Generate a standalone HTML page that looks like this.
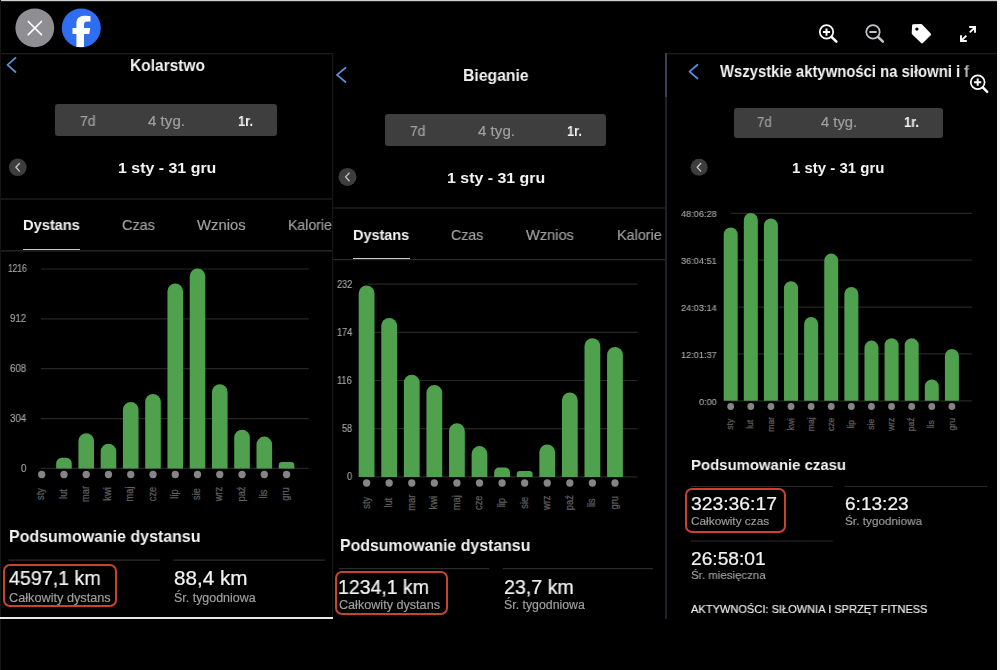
<!DOCTYPE html>
<html><head><meta charset="utf-8"><style>
html,body{margin:0;padding:0;background:#000;width:1000px;height:670px;overflow:hidden}
body{position:relative;font-family:"Liberation Sans",sans-serif}
.t{position:absolute;white-space:nowrap;transform-origin:0 0;will-change:transform}
svg{position:absolute;left:0;top:0}
svg text{font-family:"Liberation Sans",sans-serif}
</style></head><body>
<svg width="1000" height="670" viewBox="0 0 1000 670">
<line x1="0" y1="53.6" x2="332.5" y2="53.6" stroke="#1c1c1c" stroke-width="1.2"/>
<line x1="666" y1="53.6" x2="997" y2="53.6" stroke="#1c1c1c" stroke-width="1.2"/>
<circle cx="34.8" cy="27.8" r="19.4" fill="#8e8e93"/>
<path d="M28.3,21.5 L41.4,34.6 M41.4,21.5 L28.3,34.6" stroke="#fff" stroke-width="1.7" stroke-linecap="round"/>
<circle cx="81.3" cy="27.9" r="19.5" fill="#2f6ef2"/>
<path d="M76.4,46.9 V33.9 H72.5 V28 H76.4 V23.6 C76.4,18.6 79.4,15.85 84.4,15.85 C86.6,15.85 89.2,16.1 90.5,16.3 V21.4 H87.2 C84.9,21.4 84,22.6 84,24.6 V28 H90.2 L89.3,33.9 H84 V46.9 Z" fill="#fff"/>
<circle cx="826.5" cy="31.9" r="6.7" fill="none" stroke="#fff" stroke-width="1.7"/>
<path d="M822.9,32 H830.1 M826.5,28.4 V35.7" stroke="#fff" stroke-width="2"/>
<path d="M831.6,37 L836.4,41.6" stroke="#fff" stroke-width="2.5" stroke-linecap="round"/>
<circle cx="873" cy="31.9" r="6.7" fill="none" stroke="#c3c6ca" stroke-width="1.7"/>
<path d="M869.4,32 H876.6" stroke="#c3c6ca" stroke-width="2"/>
<path d="M878.1,37 L882.9,41.6" stroke="#c3c6ca" stroke-width="2.5" stroke-linecap="round"/>
<path d="M913.4,25.6 L921.2,25.4 L929.8,34.3 L922,42.1 L913,33.4 Z" fill="#fff" stroke="#fff" stroke-width="2.6" stroke-linejoin="round"/>
<circle cx="916.9" cy="29.1" r="1.7" fill="#000"/>
<path d="M969.8,32.4 L974.4,27.8 M969.2,27 H975 V32.8 M966.4,35.6 L961.8,40.2 M961,35.2 V41 H966.8" stroke="#fff" stroke-width="1.9" fill="none" stroke-linecap="butt" stroke-linejoin="miter"/>
<line x1="332.6" y1="53" x2="332.6" y2="617.5" stroke="#161616" stroke-width="1.2"/>
<line x1="666" y1="53" x2="666" y2="97" stroke="#3b404c" stroke-width="2"/>
<line x1="666" y1="97" x2="666" y2="619" stroke="#1d212c" stroke-width="2"/>
<path d="M15.50,57.80 L7.50,64.90 L15.50,72.00" fill="none" stroke="#5a8fd8" stroke-width="1.8" stroke-linecap="round" stroke-linejoin="round"/>
<circle cx="17.80" cy="167.30" r="8.80" fill="#3d3d3d"/>
<path d="M19.40,163.50 L15.90,167.30 L19.40,171.10" fill="none" stroke="#c4c4c4" stroke-width="1.4" stroke-linecap="round" stroke-linejoin="round"/>
<line x1="0" y1="199" x2="332" y2="199" stroke="#2b2b2b" stroke-width="1.2"/>
<line x1="0" y1="250.8" x2="332" y2="250.8" stroke="#2b2b2b" stroke-width="1.2"/>
<line x1="41" y1="269.00" x2="308.8" y2="269.00" stroke="#262626" stroke-width="1.2"/>
<line x1="41" y1="318.85" x2="308.8" y2="318.85" stroke="#262626" stroke-width="1.2"/>
<line x1="41" y1="368.70" x2="308.8" y2="368.70" stroke="#262626" stroke-width="1.2"/>
<line x1="41" y1="418.55" x2="308.8" y2="418.55" stroke="#262626" stroke-width="1.2"/>
<line x1="41" y1="468.40" x2="308.8" y2="468.40" stroke="#262626" stroke-width="1.2"/>
<path d="M56.16,468.60 V463.20 A5.40,5.40 0 0 1 61.56,457.80 H66.36 A5.40,5.40 0 0 1 71.76,463.20 V468.60 Z" fill="#4fa14e"/>
<path d="M78.42,468.60 V441.10 A7.80,7.80 0 0 1 86.22,433.30 H86.22 A7.80,7.80 0 0 1 94.02,441.10 V468.60 Z" fill="#4fa14e"/>
<path d="M100.68,468.60 V451.60 A7.80,7.80 0 0 1 108.48,443.80 H108.48 A7.80,7.80 0 0 1 116.28,451.60 V468.60 Z" fill="#4fa14e"/>
<path d="M122.94,468.60 V409.70 A7.80,7.80 0 0 1 130.74,401.90 H130.74 A7.80,7.80 0 0 1 138.54,409.70 V468.60 Z" fill="#4fa14e"/>
<path d="M145.20,468.60 V401.80 A7.80,7.80 0 0 1 153.00,394.00 H153.00 A7.80,7.80 0 0 1 160.80,401.80 V468.60 Z" fill="#4fa14e"/>
<path d="M167.46,468.60 V291.20 A7.80,7.80 0 0 1 175.26,283.40 H175.26 A7.80,7.80 0 0 1 183.06,291.20 V468.60 Z" fill="#4fa14e"/>
<path d="M189.72,468.60 V276.30 A7.80,7.80 0 0 1 197.52,268.50 H197.52 A7.80,7.80 0 0 1 205.32,276.30 V468.60 Z" fill="#4fa14e"/>
<path d="M211.98,468.60 V392.00 A7.80,7.80 0 0 1 219.78,384.20 H219.78 A7.80,7.80 0 0 1 227.58,392.00 V468.60 Z" fill="#4fa14e"/>
<path d="M234.24,468.60 V437.60 A7.80,7.80 0 0 1 242.04,429.80 H242.04 A7.80,7.80 0 0 1 249.84,437.60 V468.60 Z" fill="#4fa14e"/>
<path d="M256.50,468.60 V444.40 A7.80,7.80 0 0 1 264.30,436.60 H264.30 A7.80,7.80 0 0 1 272.10,444.40 V468.60 Z" fill="#4fa14e"/>
<path d="M278.76,468.60 V465.30 A3.30,3.30 0 0 1 282.06,462.00 H291.06 A3.30,3.30 0 0 1 294.36,465.30 V468.60 Z" fill="#4fa14e"/>
<circle cx="41.70" cy="474.50" r="3.65" fill="#858585"/>
<text transform="translate(44.30,494.00) rotate(-90) scale(0.93,1)" text-anchor="middle" font-size="10" fill="#5e5e5e" stroke="#5e5e5e" stroke-width="0.25">sty</text>
<circle cx="63.96" cy="474.50" r="3.65" fill="#858585"/>
<text transform="translate(66.56,494.00) rotate(-90) scale(0.93,1)" text-anchor="middle" font-size="10" fill="#5e5e5e" stroke="#5e5e5e" stroke-width="0.25">lut</text>
<circle cx="86.22" cy="474.50" r="3.65" fill="#858585"/>
<text transform="translate(88.82,494.00) rotate(-90) scale(0.93,1)" text-anchor="middle" font-size="10" fill="#5e5e5e" stroke="#5e5e5e" stroke-width="0.25">mar</text>
<circle cx="108.48" cy="474.50" r="3.65" fill="#858585"/>
<text transform="translate(111.08,494.00) rotate(-90) scale(0.93,1)" text-anchor="middle" font-size="10" fill="#5e5e5e" stroke="#5e5e5e" stroke-width="0.25">kwi</text>
<circle cx="130.74" cy="474.50" r="3.65" fill="#858585"/>
<text transform="translate(133.34,494.00) rotate(-90) scale(0.93,1)" text-anchor="middle" font-size="10" fill="#5e5e5e" stroke="#5e5e5e" stroke-width="0.25">maj</text>
<circle cx="153.00" cy="474.50" r="3.65" fill="#858585"/>
<text transform="translate(155.60,494.00) rotate(-90) scale(0.93,1)" text-anchor="middle" font-size="10" fill="#5e5e5e" stroke="#5e5e5e" stroke-width="0.25">cze</text>
<circle cx="175.26" cy="474.50" r="3.65" fill="#858585"/>
<text transform="translate(177.86,494.00) rotate(-90) scale(0.93,1)" text-anchor="middle" font-size="10" fill="#5e5e5e" stroke="#5e5e5e" stroke-width="0.25">lip</text>
<circle cx="197.52" cy="474.50" r="3.65" fill="#858585"/>
<text transform="translate(200.12,494.00) rotate(-90) scale(0.93,1)" text-anchor="middle" font-size="10" fill="#5e5e5e" stroke="#5e5e5e" stroke-width="0.25">sie</text>
<circle cx="219.78" cy="474.50" r="3.65" fill="#858585"/>
<text transform="translate(222.38,494.00) rotate(-90) scale(0.93,1)" text-anchor="middle" font-size="10" fill="#5e5e5e" stroke="#5e5e5e" stroke-width="0.25">wrz</text>
<circle cx="242.04" cy="474.50" r="3.65" fill="#858585"/>
<text transform="translate(244.64,494.00) rotate(-90) scale(0.93,1)" text-anchor="middle" font-size="10" fill="#5e5e5e" stroke="#5e5e5e" stroke-width="0.25">paź</text>
<circle cx="264.30" cy="474.50" r="3.65" fill="#858585"/>
<text transform="translate(266.90,494.00) rotate(-90) scale(0.93,1)" text-anchor="middle" font-size="10" fill="#5e5e5e" stroke="#5e5e5e" stroke-width="0.25">lis</text>
<circle cx="286.56" cy="474.50" r="3.65" fill="#858585"/>
<text transform="translate(289.16,494.00) rotate(-90) scale(0.93,1)" text-anchor="middle" font-size="10" fill="#5e5e5e" stroke="#5e5e5e" stroke-width="0.25">gru</text>
<line x1="8.2" y1="560.2" x2="160" y2="560.2" stroke="#2b2b2b" stroke-width="1.2"/>
<line x1="173.2" y1="560.2" x2="324.8" y2="560.2" stroke="#2b2b2b" stroke-width="1.2"/>
<path d="M345.50,67.80 L337.00,74.90 L345.50,82.00" fill="none" stroke="#5a8fd8" stroke-width="1.8" stroke-linecap="round" stroke-linejoin="round"/>
<circle cx="347.50" cy="176.90" r="9.00" fill="#3d3d3d"/>
<path d="M349.10,173.10 L345.60,176.90 L349.10,180.70" fill="none" stroke="#c4c4c4" stroke-width="1.4" stroke-linecap="round" stroke-linejoin="round"/>
<line x1="333" y1="208" x2="665" y2="208" stroke="#2b2b2b" stroke-width="1.2"/>
<line x1="333" y1="259.6" x2="665" y2="259.6" stroke="#2b2b2b" stroke-width="1.2"/>
<line x1="367.4" y1="284.20" x2="637.4" y2="284.20" stroke="#262626" stroke-width="1.2"/>
<line x1="367.4" y1="332.35" x2="637.4" y2="332.35" stroke="#262626" stroke-width="1.2"/>
<line x1="367.4" y1="380.50" x2="637.4" y2="380.50" stroke="#262626" stroke-width="1.2"/>
<line x1="367.4" y1="428.65" x2="637.4" y2="428.65" stroke="#262626" stroke-width="1.2"/>
<line x1="367.4" y1="476.80" x2="637.4" y2="476.80" stroke="#262626" stroke-width="1.2"/>
<path d="M358.70,477.00 V293.40 A7.90,7.90 0 0 1 366.60,285.50 H366.60 A7.90,7.90 0 0 1 374.50,293.40 V477.00 Z" fill="#4fa14e"/>
<path d="M381.28,477.00 V325.80 A7.90,7.90 0 0 1 389.18,317.90 H389.18 A7.90,7.90 0 0 1 397.08,325.80 V477.00 Z" fill="#4fa14e"/>
<path d="M403.86,477.00 V382.70 A7.90,7.90 0 0 1 411.76,374.80 H411.76 A7.90,7.90 0 0 1 419.66,382.70 V477.00 Z" fill="#4fa14e"/>
<path d="M426.44,477.00 V392.80 A7.90,7.90 0 0 1 434.34,384.90 H434.34 A7.90,7.90 0 0 1 442.24,392.80 V477.00 Z" fill="#4fa14e"/>
<path d="M449.02,477.00 V431.20 A7.90,7.90 0 0 1 456.92,423.30 H456.92 A7.90,7.90 0 0 1 464.82,431.20 V477.00 Z" fill="#4fa14e"/>
<path d="M471.60,477.00 V454.00 A7.90,7.90 0 0 1 479.50,446.10 H479.50 A7.90,7.90 0 0 1 487.40,454.00 V477.00 Z" fill="#4fa14e"/>
<path d="M494.18,477.00 V472.30 A4.70,4.70 0 0 1 498.88,467.60 H505.28 A4.70,4.70 0 0 1 509.98,472.30 V477.00 Z" fill="#4fa14e"/>
<path d="M516.76,477.00 V474.00 A3.00,3.00 0 0 1 519.76,471.00 H529.56 A3.00,3.00 0 0 1 532.56,474.00 V477.00 Z" fill="#4fa14e"/>
<path d="M539.34,477.00 V452.30 A7.90,7.90 0 0 1 547.24,444.40 H547.24 A7.90,7.90 0 0 1 555.14,452.30 V477.00 Z" fill="#4fa14e"/>
<path d="M561.92,477.00 V400.40 A7.90,7.90 0 0 1 569.82,392.50 H569.82 A7.90,7.90 0 0 1 577.72,400.40 V477.00 Z" fill="#4fa14e"/>
<path d="M584.50,477.00 V346.20 A7.90,7.90 0 0 1 592.40,338.30 H592.40 A7.90,7.90 0 0 1 600.30,346.20 V477.00 Z" fill="#4fa14e"/>
<path d="M607.08,477.00 V354.90 A7.90,7.90 0 0 1 614.98,347.00 H614.98 A7.90,7.90 0 0 1 622.88,354.90 V477.00 Z" fill="#4fa14e"/>
<circle cx="366.60" cy="483.00" r="3.65" fill="#858585"/>
<text transform="translate(369.50,502.70) rotate(-90) scale(0.93,1)" text-anchor="middle" font-size="10" fill="#5e5e5e" stroke="#5e5e5e" stroke-width="0.25">sty</text>
<circle cx="389.18" cy="483.00" r="3.65" fill="#858585"/>
<text transform="translate(392.08,502.70) rotate(-90) scale(0.93,1)" text-anchor="middle" font-size="10" fill="#5e5e5e" stroke="#5e5e5e" stroke-width="0.25">lut</text>
<circle cx="411.76" cy="483.00" r="3.65" fill="#858585"/>
<text transform="translate(414.66,502.70) rotate(-90) scale(0.93,1)" text-anchor="middle" font-size="10" fill="#5e5e5e" stroke="#5e5e5e" stroke-width="0.25">mar</text>
<circle cx="434.34" cy="483.00" r="3.65" fill="#858585"/>
<text transform="translate(437.24,502.70) rotate(-90) scale(0.93,1)" text-anchor="middle" font-size="10" fill="#5e5e5e" stroke="#5e5e5e" stroke-width="0.25">kwi</text>
<circle cx="456.92" cy="483.00" r="3.65" fill="#858585"/>
<text transform="translate(459.82,502.70) rotate(-90) scale(0.93,1)" text-anchor="middle" font-size="10" fill="#5e5e5e" stroke="#5e5e5e" stroke-width="0.25">maj</text>
<circle cx="479.50" cy="483.00" r="3.65" fill="#858585"/>
<text transform="translate(482.40,502.70) rotate(-90) scale(0.93,1)" text-anchor="middle" font-size="10" fill="#5e5e5e" stroke="#5e5e5e" stroke-width="0.25">cze</text>
<circle cx="502.08" cy="483.00" r="3.65" fill="#858585"/>
<text transform="translate(504.98,502.70) rotate(-90) scale(0.93,1)" text-anchor="middle" font-size="10" fill="#5e5e5e" stroke="#5e5e5e" stroke-width="0.25">lip</text>
<circle cx="524.66" cy="483.00" r="3.65" fill="#858585"/>
<text transform="translate(527.56,502.70) rotate(-90) scale(0.93,1)" text-anchor="middle" font-size="10" fill="#5e5e5e" stroke="#5e5e5e" stroke-width="0.25">sie</text>
<circle cx="547.24" cy="483.00" r="3.65" fill="#858585"/>
<text transform="translate(550.14,502.70) rotate(-90) scale(0.93,1)" text-anchor="middle" font-size="10" fill="#5e5e5e" stroke="#5e5e5e" stroke-width="0.25">wrz</text>
<circle cx="569.82" cy="483.00" r="3.65" fill="#858585"/>
<text transform="translate(572.72,502.70) rotate(-90) scale(0.93,1)" text-anchor="middle" font-size="10" fill="#5e5e5e" stroke="#5e5e5e" stroke-width="0.25">paź</text>
<circle cx="592.40" cy="483.00" r="3.65" fill="#858585"/>
<text transform="translate(595.30,502.70) rotate(-90) scale(0.93,1)" text-anchor="middle" font-size="10" fill="#5e5e5e" stroke="#5e5e5e" stroke-width="0.25">lis</text>
<circle cx="614.98" cy="483.00" r="3.65" fill="#858585"/>
<text transform="translate(617.88,502.70) rotate(-90) scale(0.93,1)" text-anchor="middle" font-size="10" fill="#5e5e5e" stroke="#5e5e5e" stroke-width="0.25">gru</text>
<line x1="339" y1="568.6" x2="489.2" y2="568.6" stroke="#2b2b2b" stroke-width="1.2"/>
<line x1="502.8" y1="568.6" x2="653" y2="568.6" stroke="#2b2b2b" stroke-width="1.2"/>
<path d="M697.50,64.80 L689.50,71.65 L697.50,78.50" fill="none" stroke="#5a8fd8" stroke-width="1.8" stroke-linecap="round" stroke-linejoin="round"/>
<circle cx="699.10" cy="167.30" r="8.50" fill="#3d3d3d"/>
<path d="M700.70,163.50 L697.20,167.30 L700.70,171.10" fill="none" stroke="#c4c4c4" stroke-width="1.4" stroke-linecap="round" stroke-linejoin="round"/>
<line x1="730.8" y1="213.30" x2="972" y2="213.30" stroke="#262626" stroke-width="1.2"/>
<line x1="730.8" y1="260.18" x2="972" y2="260.18" stroke="#262626" stroke-width="1.2"/>
<line x1="730.8" y1="307.06" x2="972" y2="307.06" stroke="#262626" stroke-width="1.2"/>
<line x1="730.8" y1="353.94" x2="972" y2="353.94" stroke="#262626" stroke-width="1.2"/>
<line x1="730.8" y1="400.82" x2="972" y2="400.82" stroke="#262626" stroke-width="1.2"/>
<path d="M723.70,400.80 V234.50 A7.00,7.00 0 0 1 730.70,227.50 H730.70 A7.00,7.00 0 0 1 737.70,234.50 V400.80 Z" fill="#4fa14e"/>
<path d="M743.81,400.80 V219.90 A7.00,7.00 0 0 1 750.81,212.90 H750.81 A7.00,7.00 0 0 1 757.81,219.90 V400.80 Z" fill="#4fa14e"/>
<path d="M763.92,400.80 V225.50 A7.00,7.00 0 0 1 770.92,218.50 H770.92 A7.00,7.00 0 0 1 777.92,225.50 V400.80 Z" fill="#4fa14e"/>
<path d="M784.03,400.80 V288.20 A7.00,7.00 0 0 1 791.03,281.20 H791.03 A7.00,7.00 0 0 1 798.03,288.20 V400.80 Z" fill="#4fa14e"/>
<path d="M804.14,400.80 V324.00 A7.00,7.00 0 0 1 811.14,317.00 H811.14 A7.00,7.00 0 0 1 818.14,324.00 V400.80 Z" fill="#4fa14e"/>
<path d="M824.25,400.80 V260.60 A7.00,7.00 0 0 1 831.25,253.60 H831.25 A7.00,7.00 0 0 1 838.25,260.60 V400.80 Z" fill="#4fa14e"/>
<path d="M844.36,400.80 V294.00 A7.00,7.00 0 0 1 851.36,287.00 H851.36 A7.00,7.00 0 0 1 858.36,294.00 V400.80 Z" fill="#4fa14e"/>
<path d="M864.47,400.80 V347.60 A7.00,7.00 0 0 1 871.47,340.60 H871.47 A7.00,7.00 0 0 1 878.47,347.60 V400.80 Z" fill="#4fa14e"/>
<path d="M884.58,400.80 V345.30 A7.00,7.00 0 0 1 891.58,338.30 H891.58 A7.00,7.00 0 0 1 898.58,345.30 V400.80 Z" fill="#4fa14e"/>
<path d="M904.69,400.80 V345.30 A7.00,7.00 0 0 1 911.69,338.30 H911.69 A7.00,7.00 0 0 1 918.69,345.30 V400.80 Z" fill="#4fa14e"/>
<path d="M924.80,400.80 V386.40 A7.00,7.00 0 0 1 931.80,379.40 H931.80 A7.00,7.00 0 0 1 938.80,386.40 V400.80 Z" fill="#4fa14e"/>
<path d="M944.91,400.80 V356.00 A7.00,7.00 0 0 1 951.91,349.00 H951.91 A7.00,7.00 0 0 1 958.91,356.00 V400.80 Z" fill="#4fa14e"/>
<circle cx="730.70" cy="406.50" r="3.40" fill="#858585"/>
<text transform="translate(733.30,424.30) rotate(-90) scale(0.93,1)" text-anchor="middle" font-size="9.2" fill="#5e5e5e" stroke="#5e5e5e" stroke-width="0.25">sty</text>
<circle cx="750.81" cy="406.50" r="3.40" fill="#858585"/>
<text transform="translate(753.41,424.30) rotate(-90) scale(0.93,1)" text-anchor="middle" font-size="9.2" fill="#5e5e5e" stroke="#5e5e5e" stroke-width="0.25">lut</text>
<circle cx="770.92" cy="406.50" r="3.40" fill="#858585"/>
<text transform="translate(773.52,424.30) rotate(-90) scale(0.93,1)" text-anchor="middle" font-size="9.2" fill="#5e5e5e" stroke="#5e5e5e" stroke-width="0.25">mar</text>
<circle cx="791.03" cy="406.50" r="3.40" fill="#858585"/>
<text transform="translate(793.63,424.30) rotate(-90) scale(0.93,1)" text-anchor="middle" font-size="9.2" fill="#5e5e5e" stroke="#5e5e5e" stroke-width="0.25">kwi</text>
<circle cx="811.14" cy="406.50" r="3.40" fill="#858585"/>
<text transform="translate(813.74,424.30) rotate(-90) scale(0.93,1)" text-anchor="middle" font-size="9.2" fill="#5e5e5e" stroke="#5e5e5e" stroke-width="0.25">maj</text>
<circle cx="831.25" cy="406.50" r="3.40" fill="#858585"/>
<text transform="translate(833.85,424.30) rotate(-90) scale(0.93,1)" text-anchor="middle" font-size="9.2" fill="#5e5e5e" stroke="#5e5e5e" stroke-width="0.25">cze</text>
<circle cx="851.36" cy="406.50" r="3.40" fill="#858585"/>
<text transform="translate(853.96,424.30) rotate(-90) scale(0.93,1)" text-anchor="middle" font-size="9.2" fill="#5e5e5e" stroke="#5e5e5e" stroke-width="0.25">lip</text>
<circle cx="871.47" cy="406.50" r="3.40" fill="#858585"/>
<text transform="translate(874.07,424.30) rotate(-90) scale(0.93,1)" text-anchor="middle" font-size="9.2" fill="#5e5e5e" stroke="#5e5e5e" stroke-width="0.25">sie</text>
<circle cx="891.58" cy="406.50" r="3.40" fill="#858585"/>
<text transform="translate(894.18,424.30) rotate(-90) scale(0.93,1)" text-anchor="middle" font-size="9.2" fill="#5e5e5e" stroke="#5e5e5e" stroke-width="0.25">wrz</text>
<circle cx="911.69" cy="406.50" r="3.40" fill="#858585"/>
<text transform="translate(914.29,424.30) rotate(-90) scale(0.93,1)" text-anchor="middle" font-size="9.2" fill="#5e5e5e" stroke="#5e5e5e" stroke-width="0.25">paź</text>
<circle cx="931.80" cy="406.50" r="3.40" fill="#858585"/>
<text transform="translate(934.40,424.30) rotate(-90) scale(0.93,1)" text-anchor="middle" font-size="9.2" fill="#5e5e5e" stroke="#5e5e5e" stroke-width="0.25">lis</text>
<circle cx="951.91" cy="406.50" r="3.40" fill="#858585"/>
<text transform="translate(954.51,424.30) rotate(-90) scale(0.93,1)" text-anchor="middle" font-size="9.2" fill="#5e5e5e" stroke="#5e5e5e" stroke-width="0.25">gru</text>
<line x1="691" y1="486.5" x2="832.8" y2="486.5" stroke="#2b2b2b" stroke-width="1.2"/>
<line x1="844.7" y1="486.5" x2="987.2" y2="486.5" stroke="#2b2b2b" stroke-width="1.2"/>
<line x1="691" y1="541" x2="832.8" y2="541" stroke="#2b2b2b" stroke-width="1.2"/>
</svg>
<div style="position:absolute;left:0px;top:0px;width:1000px;height:1px;background:#ced1ce;"></div>
<div style="position:absolute;left:0px;top:1px;width:1000px;height:1px;background:#262626;"></div>
<div style="position:absolute;left:996.8px;top:0px;width:3.2px;height:670px;background:#f4f4f4;"></div>
<div style="position:absolute;left:0px;top:0px;width:1.2px;height:670px;background:#141414;"></div>
<div style="position:absolute;left:0px;top:617.3px;width:332.5px;height:2.2px;background:#e8e8e8;"></div>
<div class="t" style="left:129.50px;top:57.27px;font-size:17.40px;line-height:17.40px;font-weight:bold;color:#f2f2f2;transform:scaleX(0.8915);">Kolarstwo</div>
<div style="position:absolute;left:55.3px;top:104.2px;width:222.2px;height:31.7px;background:#3e3e3e;border-radius:3px"></div>
<div class="t" style="left:80.00px;top:113.74px;font-size:14.60px;line-height:14.60px;font-weight:normal;color:#a0a0a0;transform:scaleX(0.9626);-webkit-text-stroke:0.18px #a0a0a0;">7d</div>
<div class="t" style="left:148.00px;top:113.74px;font-size:14.60px;line-height:14.60px;font-weight:normal;color:#a0a0a0;transform:scaleX(1.0365);-webkit-text-stroke:0.18px #a0a0a0;">4 tyg.</div>
<div class="t" style="left:237.70px;top:113.74px;font-size:14.60px;line-height:14.60px;font-weight:bold;color:#f2f2f2;transform:scaleX(0.8840);">1r.</div>
<div class="t" style="left:117.60px;top:160.26px;font-size:15.40px;line-height:15.40px;font-weight:bold;color:#f2f2f2;transform:scaleX(1.0356);">1 sty - 31 gru</div>
<div class="t" style="left:23.10px;top:217.97px;font-size:14.80px;line-height:14.80px;font-weight:bold;color:#f2f2f2;transform:scaleX(0.9883);">Dystans</div>
<div class="t" style="left:121.80px;top:217.97px;font-size:14.80px;line-height:14.80px;font-weight:normal;color:#a0a0a0;transform:scaleX(0.9780);-webkit-text-stroke:0.18px #a0a0a0;">Czas</div>
<div class="t" style="left:197.00px;top:217.97px;font-size:14.80px;line-height:14.80px;font-weight:normal;color:#a0a0a0;transform:scaleX(1.0012);-webkit-text-stroke:0.18px #a0a0a0;">Wznios</div>
<div style="position:absolute;left:0;top:200px;width:332.5px;height:50px;overflow:hidden">
<div class="t" style="left:288.00px;top:17.97px;font-size:14.80px;line-height:14.80px;font-weight:normal;color:#a0a0a0;transform:scaleX(0.9544);-webkit-text-stroke:0.18px #a0a0a0;">Kalorie</div>
</div>
<div style="position:absolute;left:23px;top:248.6px;width:57px;height:1.7px;background:#c8c8c8;"></div>
<div class="t" style="left:7.51px;top:264.48px;font-size:10.00px;line-height:10.00px;font-weight:normal;color:#a8a8a8;transform:scaleX(0.8400);-webkit-text-stroke:0.12px #a8a8a8;">1216</div>
<div class="t" style="left:10.00px;top:314.33px;font-size:10.00px;line-height:10.00px;font-weight:normal;color:#a8a8a8;transform:scaleX(0.9700);-webkit-text-stroke:0.12px #a8a8a8;">912</div>
<div class="t" style="left:10.00px;top:364.18px;font-size:10.00px;line-height:10.00px;font-weight:normal;color:#a8a8a8;transform:scaleX(0.9700);-webkit-text-stroke:0.12px #a8a8a8;">608</div>
<div class="t" style="left:10.00px;top:414.03px;font-size:10.00px;line-height:10.00px;font-weight:normal;color:#a8a8a8;transform:scaleX(0.9700);-webkit-text-stroke:0.12px #a8a8a8;">304</div>
<div class="t" style="left:20.82px;top:463.88px;font-size:10.00px;line-height:10.00px;font-weight:normal;color:#a8a8a8;transform:scaleX(0.9700);-webkit-text-stroke:0.12px #a8a8a8;">0</div>
<div class="t" style="left:9.35px;top:528.02px;font-size:16.40px;line-height:16.40px;font-weight:bold;color:#f2f2f2;transform:scaleX(0.9734);">Podsumowanie dystansu</div>
<div style="position:absolute;left:3px;top:564px;width:114px;height:43.2px;background:transparent;box-sizing:border-box;border:2px solid #c9432e;border-radius:7px"></div>
<div class="t" style="left:9.00px;top:568.20px;font-size:20.20px;line-height:20.20px;font-weight:normal;color:#f2f2f2;transform:scaleX(0.9731);-webkit-text-stroke:0.24px #f2f2f2;">4597,1 km</div>
<div class="t" style="left:8.50px;top:591.79px;font-size:12.30px;line-height:12.30px;font-weight:normal;color:#a0a0a0;transform:scaleX(1.0329);-webkit-text-stroke:0.15px #a0a0a0;">Całkowity dystans</div>
<div class="t" style="left:173.80px;top:568.20px;font-size:20.20px;line-height:20.20px;font-weight:normal;color:#f2f2f2;transform:scaleX(1.0235);-webkit-text-stroke:0.24px #f2f2f2;">88,4 km</div>
<div class="t" style="left:173.80px;top:591.59px;font-size:12.30px;line-height:12.30px;font-weight:normal;color:#a0a0a0;transform:scaleX(1.0118);-webkit-text-stroke:0.15px #a0a0a0;">Śr. tygodniowa</div>
<div class="t" style="left:462.60px;top:67.37px;font-size:17.40px;line-height:17.40px;font-weight:bold;color:#f2f2f2;transform:scaleX(0.9055);">Bieganie</div>
<div style="position:absolute;left:385.1px;top:114.4px;width:221.4px;height:31.5px;background:#3e3e3e;border-radius:3px"></div>
<div class="t" style="left:410.00px;top:123.84px;font-size:14.60px;line-height:14.60px;font-weight:normal;color:#a0a0a0;transform:scaleX(0.9564);-webkit-text-stroke:0.18px #a0a0a0;">7d</div>
<div class="t" style="left:477.80px;top:123.84px;font-size:14.60px;line-height:14.60px;font-weight:normal;color:#a0a0a0;transform:scaleX(1.0365);-webkit-text-stroke:0.18px #a0a0a0;">4 tyg.</div>
<div class="t" style="left:567.30px;top:123.84px;font-size:14.60px;line-height:14.60px;font-weight:bold;color:#f2f2f2;transform:scaleX(0.8781);">1r.</div>
<div class="t" style="left:446.70px;top:170.16px;font-size:15.40px;line-height:15.40px;font-weight:bold;color:#f2f2f2;transform:scaleX(1.0345);">1 sty - 31 gru</div>
<div class="t" style="left:353.10px;top:228.17px;font-size:14.80px;line-height:14.80px;font-weight:bold;color:#f2f2f2;transform:scaleX(0.9762);">Dystans</div>
<div class="t" style="left:451.40px;top:228.17px;font-size:14.80px;line-height:14.80px;font-weight:normal;color:#a0a0a0;transform:scaleX(0.9572);-webkit-text-stroke:0.18px #a0a0a0;">Czas</div>
<div class="t" style="left:526.30px;top:228.17px;font-size:14.80px;line-height:14.80px;font-weight:normal;color:#a0a0a0;transform:scaleX(0.9867);-webkit-text-stroke:0.18px #a0a0a0;">Wznios</div>
<div class="t" style="left:616.70px;top:228.17px;font-size:14.80px;line-height:14.80px;font-weight:normal;color:#a0a0a0;transform:scaleX(0.9739);-webkit-text-stroke:0.18px #a0a0a0;">Kalorie</div>
<div style="position:absolute;left:353px;top:257.5px;width:56.6px;height:1.7px;background:#c8c8c8;"></div>
<div class="t" style="left:336.64px;top:279.68px;font-size:10.00px;line-height:10.00px;font-weight:normal;color:#a8a8a8;transform:scaleX(0.9200);-webkit-text-stroke:0.12px #a8a8a8;">232</div>
<div class="t" style="left:336.64px;top:327.82px;font-size:10.00px;line-height:10.00px;font-weight:normal;color:#a8a8a8;transform:scaleX(0.9200);-webkit-text-stroke:0.12px #a8a8a8;">174</div>
<div class="t" style="left:337.33px;top:375.98px;font-size:10.00px;line-height:10.00px;font-weight:normal;color:#a8a8a8;transform:scaleX(0.9200);-webkit-text-stroke:0.12px #a8a8a8;">116</div>
<div class="t" style="left:341.79px;top:424.12px;font-size:10.00px;line-height:10.00px;font-weight:normal;color:#a8a8a8;transform:scaleX(0.9200);-webkit-text-stroke:0.12px #a8a8a8;">58</div>
<div class="t" style="left:346.89px;top:472.27px;font-size:10.00px;line-height:10.00px;font-weight:normal;color:#a8a8a8;transform:scaleX(0.9200);-webkit-text-stroke:0.12px #a8a8a8;">0</div>
<div class="t" style="left:339.50px;top:536.62px;font-size:16.40px;line-height:16.40px;font-weight:bold;color:#f2f2f2;transform:scaleX(0.9676);">Podsumowanie dystansu</div>
<div style="position:absolute;left:334.8px;top:571.2px;width:113.2px;height:43.6px;background:transparent;box-sizing:border-box;border:2px solid #c9432e;border-radius:7px"></div>
<div class="t" style="left:338.40px;top:577.00px;font-size:20.20px;line-height:20.20px;font-weight:normal;color:#f2f2f2;transform:scaleX(0.9647);-webkit-text-stroke:0.24px #f2f2f2;">1234,1 km</div>
<div class="t" style="left:338.50px;top:599.09px;font-size:12.30px;line-height:12.30px;font-weight:normal;color:#a0a0a0;transform:scaleX(1.0258);-webkit-text-stroke:0.15px #a0a0a0;">Całkowity dystans</div>
<div class="t" style="left:503.50px;top:577.00px;font-size:20.20px;line-height:20.20px;font-weight:normal;color:#f2f2f2;transform:scaleX(0.9706);-webkit-text-stroke:0.24px #f2f2f2;">23,7 km</div>
<div class="t" style="left:503.50px;top:599.09px;font-size:12.30px;line-height:12.30px;font-weight:normal;color:#a0a0a0;transform:scaleX(1.0019);-webkit-text-stroke:0.15px #a0a0a0;">Śr. tygodniowa</div>
<div style="position:absolute;left:700px;top:55px;width:272px;height:30px;overflow:hidden;-webkit-mask-image:linear-gradient(to right,#000 0,#000 264px,rgba(0,0,0,0.35) 270px)">
<div class="t" style="left:19.50px;top:8.58px;font-size:16.80px;line-height:16.80px;font-weight:bold;color:#f2f2f2;transform:scaleX(0.8848);">Wszystkie aktywności na siłowni i f</div>
</div>
<svg width="1000" height="670" style="position:absolute;left:0;top:0"><circle cx="977.7" cy="82.2" r="6.9" fill="#000" stroke="#fff" stroke-width="1.7"/><path d="M974.1,82.2 H981.3 M977.7,78.6 V85.8" stroke="#fff" stroke-width="2"/><path d="M982.8,87.3 L987.2,91.8" stroke="#fff" stroke-width="2.5" stroke-linecap="round"/></svg>
<div style="position:absolute;left:734.1px;top:108.3px;width:208.9px;height:29.5px;background:#3e3e3e;border-radius:3px"></div>
<div class="t" style="left:757.00px;top:116.42px;font-size:13.80px;line-height:13.80px;font-weight:normal;color:#a0a0a0;transform:scaleX(0.9531);-webkit-text-stroke:0.17px #a0a0a0;">7d</div>
<div class="t" style="left:820.50px;top:116.42px;font-size:13.80px;line-height:13.80px;font-weight:normal;color:#a0a0a0;transform:scaleX(1.0699);-webkit-text-stroke:0.17px #a0a0a0;">4 tyg.</div>
<div class="t" style="left:904.00px;top:116.42px;font-size:13.80px;line-height:13.80px;font-weight:bold;color:#f2f2f2;transform:scaleX(0.9290);">1r.</div>
<div class="t" style="left:792.00px;top:161.14px;font-size:14.60px;line-height:14.60px;font-weight:bold;color:#f2f2f2;transform:scaleX(1.0268);">1 sty - 31 gru</div>
<div class="t" style="left:681.49px;top:208.98px;font-size:9.60px;line-height:9.60px;font-weight:normal;color:#a8a8a8;transform:scaleX(0.9550);-webkit-text-stroke:0.12px #a8a8a8;">48:06:28</div>
<div class="t" style="left:681.49px;top:255.86px;font-size:9.60px;line-height:9.60px;font-weight:normal;color:#a8a8a8;transform:scaleX(0.9550);-webkit-text-stroke:0.12px #a8a8a8;">36:04:51</div>
<div class="t" style="left:681.49px;top:302.74px;font-size:9.60px;line-height:9.60px;font-weight:normal;color:#a8a8a8;transform:scaleX(0.9550);-webkit-text-stroke:0.12px #a8a8a8;">24:03:14</div>
<div class="t" style="left:681.49px;top:349.62px;font-size:9.60px;line-height:9.60px;font-weight:normal;color:#a8a8a8;transform:scaleX(0.9550);-webkit-text-stroke:0.12px #a8a8a8;">12:01:37</div>
<div class="t" style="left:699.37px;top:396.50px;font-size:9.60px;line-height:9.60px;font-weight:normal;color:#a8a8a8;transform:scaleX(0.9550);-webkit-text-stroke:0.12px #a8a8a8;">0:00</div>
<div class="t" style="left:691.30px;top:457.46px;font-size:15.40px;line-height:15.40px;font-weight:bold;color:#f2f2f2;transform:scaleX(0.9693);">Podsumowanie czasu</div>
<div style="position:absolute;left:684.5px;top:487.8px;width:101.4px;height:45px;background:transparent;box-sizing:border-box;border:2px solid #c9432e;border-radius:7px"></div>
<div class="t" style="left:691.30px;top:495.16px;font-size:18.60px;line-height:18.60px;font-weight:normal;color:#f2f2f2;transform:scaleX(1.0390);-webkit-text-stroke:0.22px #f2f2f2;">323:36:17</div>
<div class="t" style="left:691.30px;top:515.51px;font-size:11.80px;line-height:11.80px;font-weight:normal;color:#a0a0a0;transform:scaleX(1.0018);-webkit-text-stroke:0.14px #a0a0a0;">Całkowity czas</div>
<div class="t" style="left:845.40px;top:495.16px;font-size:18.60px;line-height:18.60px;font-weight:normal;color:#f2f2f2;transform:scaleX(1.0253);-webkit-text-stroke:0.22px #f2f2f2;">6:13:23</div>
<div class="t" style="left:845.40px;top:515.51px;font-size:11.80px;line-height:11.80px;font-weight:normal;color:#a0a0a0;transform:scaleX(0.9966);-webkit-text-stroke:0.14px #a0a0a0;">Śr. tygodniowa</div>
<div class="t" style="left:691.30px;top:549.56px;font-size:18.60px;line-height:18.60px;font-weight:normal;color:#f2f2f2;transform:scaleX(1.0311);-webkit-text-stroke:0.22px #f2f2f2;">26:58:01</div>
<div class="t" style="left:691.30px;top:570.01px;font-size:11.80px;line-height:11.80px;font-weight:normal;color:#a0a0a0;transform:scaleX(0.9732);-webkit-text-stroke:0.14px #a0a0a0;">Śr. miesięczna</div>
<div class="t" style="left:691.30px;top:604.35px;font-size:11.40px;line-height:11.40px;font-weight:normal;color:#f2f2f2;transform:scaleX(0.9714);-webkit-text-stroke:0.14px #f2f2f2;">AKTYWNOŚCI: SIŁOWNIA I SPRZĘT FITNESS</div>
</body></html>
